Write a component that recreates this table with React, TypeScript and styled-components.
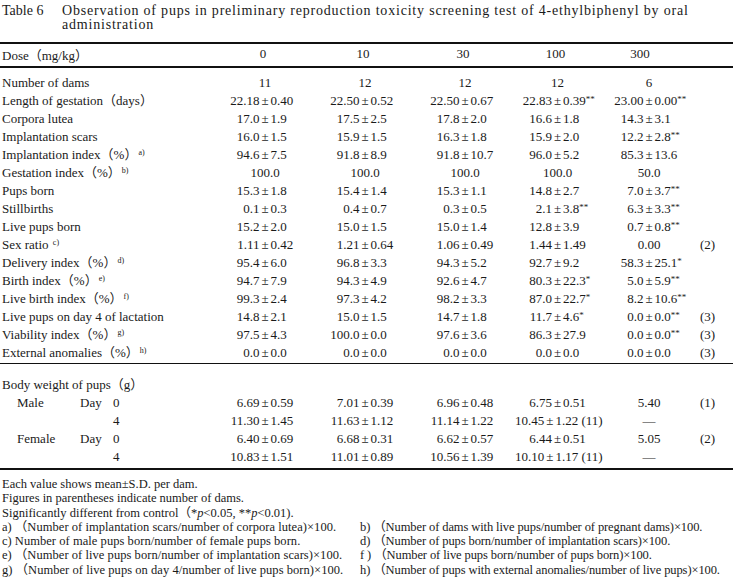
import React from 'react';
import styled, { createGlobalStyle } from 'styled-components';

const GlobalStyle = createGlobalStyle`
  html, body {
    margin: 0;
    padding: 0;
    background: #ffffff;
  }
  body {
    font-family: 'Liberation Serif', 'Noto Sans CJK JP', serif;
    color: #1a1a1a;
  }
`;

type Cell = string | { v: string; note?: string };

type Row = {
  label: React.ReactNode;
  cells: Cell[];
};

const Sup = ({ children }: { children: React.ReactNode }) => <FootMark>{children}</FootMark>;

const rows: Row[] = [
  { label: 'Number of dams', cells: ['11', '12', '12', '12', '6'] },
  {
    label: 'Length of gestation（days）',
    cells: ['22.18±0.40', '22.50±0.52', '22.50±0.67', '22.83±0.39**', '23.00±0.00**']
  },
  { label: 'Corpora lutea', cells: ['17.0±1.9', '17.5±2.5', '17.8±2.0', '16.6±1.8', '14.3±3.1'] },
  { label: 'Implantation scars', cells: ['16.0±1.5', '15.9±1.5', '16.3±1.8', '15.9±2.0', '12.2±2.8**'] },
  {
    label: (
      <>
        Implantation index（%）<Sup>a)</Sup>
      </>
    ),
    cells: ['94.6±7.5', '91.8±8.9', '91.8±10.7', '96.0±5.2', '85.3±13.6']
  },
  {
    label: (
      <>
        Gestation index（%）<Sup>b)</Sup>
      </>
    ),
    cells: ['100.0', '100.0', '100.0', '100.0', '50.0']
  },
  { label: 'Pups born', cells: ['15.3±1.8', '15.4±1.4', '15.3±1.1', '14.8±2.7', '7.0±3.7**'] },
  { label: 'Stillbirths', cells: ['0.1±0.3', '0.4±0.7', '0.3±0.5', '2.1±3.8**', '6.3±3.3**'] },
  { label: 'Live pups born', cells: ['15.2±2.0', '15.0±1.5', '15.0±1.4', '12.8±3.9', '0.7±0.8**'] },
  {
    label: (
      <>
        Sex ratio <Sup>c)</Sup>
      </>
    ),
    cells: ['1.11±0.42', '1.21±0.64', '1.06±0.49', '1.44±1.49', { v: '0.00', note: '(2)' }]
  },
  {
    label: (
      <>
        Delivery index（%）<Sup>d)</Sup>
      </>
    ),
    cells: ['95.4±6.0', '96.8±3.3', '94.3±5.2', '92.7±9.2', '58.3±25.1*']
  },
  {
    label: (
      <>
        Birth index（%）<Sup>e)</Sup>
      </>
    ),
    cells: ['94.7±7.9', '94.3±4.9', '92.6±4.7', '80.3±22.3*', '5.0±5.9**']
  },
  {
    label: (
      <>
        Live birth index（%）<Sup>f)</Sup>
      </>
    ),
    cells: ['99.3±2.4', '97.3±4.2', '98.2±3.3', '87.0±22.7*', '8.2±10.6**']
  },
  {
    label: 'Live pups on day 4 of lactation',
    cells: ['14.8±2.1', '15.0±1.5', '14.7±1.8', '11.7±4.6*', { v: '0.0±0.0**', note: '(3)' }]
  },
  {
    label: (
      <>
        Viability index（%）<Sup>g)</Sup>
      </>
    ),
    cells: ['97.5±4.3', '100.0±0.0', '97.6±3.6', '86.3±27.9', { v: '0.0±0.0**', note: '(3)' }]
  },
  {
    label: (
      <>
        External anomalies（%）<Sup>h)</Sup>
      </>
    ),
    cells: ['0.0±0.0', '0.0±0.0', '0.0±0.0', '0.0±0.0', { v: '0.0±0.0', note: '(3)' }]
  }
];

type WeightRow = { sex?: string; day: string; cells: Cell[] };

const weightRows: WeightRow[] = [
  { sex: 'Male', day: '0', cells: ['6.69±0.59', '7.01±0.39', '6.96±0.48', '6.75±0.51', { v: '5.40', note: '(1)' }] },
  { day: '4', cells: ['11.30±1.45', '11.63±1.12', '11.14±1.22', '10.45±1.22 (11)', '—'] },
  { sex: 'Female', day: '0', cells: ['6.40±0.69', '6.68±0.31', '6.62±0.57', '6.44±0.51', { v: '5.05', note: '(2)' }] },
  { day: '4', cells: ['10.83±1.51', '11.01±0.89', '10.56±1.39', '10.10±1.17 (11)', '—'] }
];

const footPairs: [string, string, string, string][] = [
  ['a)', '（Number of implantation scars/number of corpora lutea)×100.', 'b)', '（Number of dams with live pups/number of pregnant dams)×100.'],
  ['c)', 'Number of male pups born/number of female pups born.', 'd)', '（Number of pups born/number of implantation scars)×100.'],
  ['e)', '（Number of live pups born/number of implantation scars)×100.', 'f )', '（Number of live pups born/number of pups born)×100.'],
  ['g)', '（Number of live pups on day 4/number of live pups born)×100.', 'h)', '（Number of pups with external anomalies/number of live pups)×100.']
];

// splits "22.83±0.39**" into mean / sd / stars / trailing text
const Value = ({ text }: { text: string }) => {
  const idx = text.indexOf('±');
  if (idx < 0) return <Plain>{text}</Plain>;
  const mean = text.slice(0, idx);
  const rest = text.slice(idx + 1);
  const m = rest.match(/^([0-9.]+)(\**)(.*)$/);
  const sd = m ? m[1] : rest;
  const stars = m ? m[2] : '';
  const tail = m ? m[3] : '';
  return (
    <PlusMinus>
      <Mean>{mean}</Mean>
      <Pm>±</Pm>
      <Sd>
        {sd}
        {stars && <Stars>{stars}</Stars>}
        {tail}
      </Sd>
    </PlusMinus>
  );
};

const Cells = ({ cells }: { cells: Cell[] }) => {
  const note = cells.map((c) => (typeof c === 'string' ? undefined : c.note)).find(Boolean);
  return (
    <>
      {cells.map((c, i) => (
        <ValueCell key={i}>
          <Value text={typeof c === 'string' ? c : c.v} />
        </ValueCell>
      ))}
      <NoteCell>{note}</NoteCell>
    </>
  );
};

export default function App() {
  return (
    <Page>
      <GlobalStyle />
      <Caption>
        <CaptionNo>Table 6</CaptionNo>
        <CaptionText>
          Observation of pups in preliminary reproduction toxicity screening test of 4-ethylbiphenyl by oral
          administration
        </CaptionText>
      </Caption>

      <Table>
        <HeadRow>
          <LabelCell>Dose（mg/kg）</LabelCell>
          {['0', '10', '30', '100', '300'].map((d, i) => (
            <HeadCell key={d} shift={i === 4 ? -9 : -2}>
              {d}
            </HeadCell>
          ))}
          <NoteCell />
        </HeadRow>

        <Section>
          {rows.map((r, i) => (
            <DataRow key={i}>
              <LabelCell>{r.label}</LabelCell>
              <Cells cells={r.cells} />
            </DataRow>
          ))}
        </Section>

        <WeightSection>
          <DataRow>
            <LabelCell>Body weight of pups（g）</LabelCell>
          </DataRow>
          {weightRows.map((r, i) => (
            <DataRow key={i}>
              <WeightLabel>
                <span>{r.sex}</span>
                <span>{r.sex ? 'Day' : ''}</span>
                <span>{r.day}</span>
              </WeightLabel>
              <Cells cells={r.cells} />
            </DataRow>
          ))}
        </WeightSection>
      </Table>

      <Notes>
        <NoteLine>Each value shows mean±S.D. per dam.</NoteLine>
        <NoteLine>Figures in parentheses indicate number of dams.</NoteLine>
        <NoteLine>
          Significantly different from control（*<Ital>p</Ital>&lt;0.05, **<Ital>p</Ital>&lt;0.01).
        </NoteLine>
        <FootGrid>
          {footPairs.map(([k1, t1, k2, t2]) => (
            <React.Fragment key={k1}>
              <FootItem spacing={0.05}>
                <FootKey>{k1}</FootKey>
                <span>{t1}</span>
              </FootItem>
              <FootItem spacing={-0.1}>
                <FootKey>{k2}</FootKey>
                <span>{t2}</span>
              </FootItem>
            </React.Fragment>
          ))}
        </FootGrid>
      </Notes>
    </Page>
  );
}

const Page = styled.div`
  width: 733px;
  height: 579px;
  overflow: hidden;
  padding-top: 4px;
  box-sizing: border-box;
  font-size: 13px;
`;

const Caption = styled.div`
  display: flex;
  padding-left: 2px;
  font-size: 14px;
  line-height: 14px;
  height: 38px;
`;

const CaptionNo = styled.div`
  width: 60px;
  flex-shrink: 0;
`;

const CaptionText = styled.div`
  width: 640px;
  letter-spacing: 0.8px;
`;

const Table = styled.div`
  border-top: 2px solid #111;
`;

const columns = '215px 100px 100px 100px 85px 98px 35px';

const HeadRow = styled.div`
  display: grid;
  grid-template-columns: ${columns};
  align-items: center;
  height: 20px;
  padding-bottom: 2px;
  border-bottom: 2px solid #111;
`;

const HeadCell = styled.div<{ shift: number }>`
  text-align: center;
  transform: translateX(${(p) => p.shift}px);
`;

const Section = styled.div`
  padding: 6px 0 1px;
  border-bottom: 1.5px solid #111;
`;

const WeightSection = styled.div`
  padding: 12px 0 2px;
  border-bottom: 2px solid #111;
`;

const DataRow = styled.div`
  display: grid;
  grid-template-columns: ${columns};
  align-items: center;
  height: 18px;
  line-height: 18px;
  white-space: nowrap;
`;

const LabelCell = styled.div`
  padding-left: 2px;
`;

const WeightLabel = styled.div`
  display: grid;
  grid-template-columns: 63px 33px auto;
  padding-left: 17px;
`;

const ValueCell = styled.div`
  min-width: 0;
`;

const NoteCell = styled.div`
  padding-left: 2px;
`;

const PlusMinus = styled.div`
  display: grid;
  grid-template-columns: 1fr auto 1fr;
`;

const Mean = styled.span`
  text-align: right;
`;

const Pm = styled.span`
  padding: 0 2px;
`;

const Sd = styled.span`
  text-align: left;
`;

const Plain = styled.div`
  text-align: center;
`;

const Stars = styled.span`
  font-size: 9px;
  vertical-align: 3px;
  line-height: 0;
`;

const FootMark = styled.span`
  font-size: 8px;
  vertical-align: 4px;
  line-height: 0;
  margin-left: 1px;
`;

const Notes = styled.div`
  padding: 7px 0 0 2px;
  font-size: 12.5px;
  line-height: 14.3px;
`;

const NoteLine = styled.div`
  white-space: nowrap;
`;

const Ital = styled.i`
  font-style: italic;
`;

const FootGrid = styled.div`
  display: grid;
  grid-template-columns: 358px 1fr;
  white-space: nowrap;
`;

const FootItem = styled.div<{ spacing: number }>`
  display: flex;
  gap: 3px;
  letter-spacing: ${(p) => p.spacing}px;
`;

const FootKey = styled.span`
  flex-shrink: 0;
`;
